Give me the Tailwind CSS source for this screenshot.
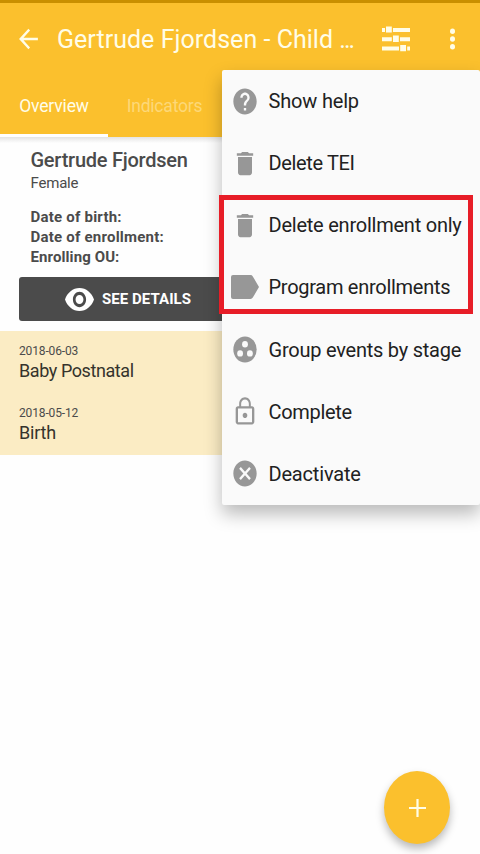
<!DOCTYPE html>
<html lang="en">
<head>
<meta charset="utf-8">
<title>Dashboard</title>
<script src="https://cdn.jsdelivr.net/npm/@tailwindcss/browser@4"></script>
</head>
<body class="relative h-[854px] w-[480px] overflow-hidden bg-[#fefefe] font-['Roboto',sans-serif] text-[#4b4b4b]">
<header class="flex h-[137px] flex-col border-t-[3px] border-[#c98f00] bg-[#fbc02d] text-[#fffde8]">
  <div class="flex h-[72px] items-center pl-[16px]">
    <svg class="h-[28px] w-[25px]" viewBox="0 0 24 24" preserveAspectRatio="none" fill="none" stroke="currentColor" stroke-width="2.200"><path d="M21 12H5M12.700 4L4.500 12l8.200 8"/></svg>
    <h1 class="ml-[16px] w-[309px] pt-px text-[25px] leading-[32px] tracking-[0.03px] whitespace-nowrap">Gertrude Fjordsen - Child <span class="tracking-[-2px]">...</span></h1>
    <svg class="ml-[16px] h-[26px] w-[28px]" viewBox="0 0 28 26" fill="currentColor"><path d="M0 2h3v4H0zM4 0.500h5.800v6H4zM11 2h17v4H11zM0 11.200h9.800v4H0zM11 9.500h5.800V16H11zM18 11.200h10v4H18zM0 20.500h17v4H0zM18.200 19h5.800v6.300h-5.800zM25.200 20.500h2.800v4h-2.800z"/></svg>
    <svg class="ml-[40px] h-[22px] w-[6px]" viewBox="0 0 6 22" fill="currentColor"><ellipse cx="2.500" cy="3.300" rx="2.500" ry="2.700"/><ellipse cx="2.500" cy="11" rx="2.500" ry="2.700"/><ellipse cx="2.500" cy="18.700" rx="2.500" ry="2.700"/></svg>
  </div>
  <nav class="flex flex-1 text-[17.500px]">
    <div class="flex w-[108px] items-center justify-center border-b-[3px] border-white pt-[3px]"><span class="tracking-[-0.15px]">Overview</span></div>
    <div class="flex w-[113px] items-center justify-center text-[#fdd878]"><span class="tracking-[-0.2px]">Indicators</span></div>
  </nav>
</header>
<section class="h-[194px] bg-linear-to-b from-[#e4e4e4] to-[#fefefe] to-[6px] pt-[10px]">
  <div class="pl-[30.500px]">
    <h2 class="text-[20px] leading-[26px] font-medium tracking-[-0.25px]">Gertrude Fjordsen</h2>
    <p class="text-[15px] leading-[20px] tracking-[-0.2px]">Female</p>
    <div class="mt-[14px] text-[15px] leading-[20px] font-bold tracking-[0.22px]">
      <p>Date of birth:</p><p>Date of enrollment:</p><p class="tracking-[0.1px]">Enrolling OU:</p>
    </div>
  </div>
  <button class="mt-[10px] ml-[19px] flex h-[44px] w-[442px] items-center rounded-[3px] bg-[#4b4b4b] pl-[46px] text-white">
    <svg class="h-[23px] w-[29px]" viewBox="1 4.500 22 15" preserveAspectRatio="none" fill="currentColor"><path d="M12 4.500C7 4.500 2.730 7.610 1 12c1.730 4.390 6 7.500 11 7.500s9.270-3.110 11-7.500c-1.730-4.390-6-7.500-11-7.500zM12 17c-2.760 0-5-2.240-5-5s2.240-5 5-5 5 2.240 5 5-2.240 5-5 5zm0-8c-1.660 0-3 1.340-3 3s1.340 3 3 3 3-1.340 3-3-1.340-3-3-3z"/></svg>
    <span class="ml-[8px] text-[15px] font-bold tracking-[0.05px]">SEE DETAILS</span>
  </button>
</section>
<section class="h-[124px] bg-[#fbecc4] pl-[19px]">
  <div class="h-[62px] pt-[12px]"><p class="text-[12px] leading-[16px] tracking-[-0.15px]">2018-06-03</p><p class="text-[18px] leading-[23px] tracking-[-0.42px] text-[#35332c]">Baby Postnatal</p></div>
  <div class="h-[62px] pt-[12px]"><p class="text-[12px] leading-[16px] tracking-[-0.15px]">2018-05-12</p><p class="text-[18px] leading-[23px] tracking-[-0.2px] text-[#35332c]">Birth</p></div>
</section>

<!-- Overflow menu -->
<div class="absolute top-[70px] left-[222px] flex h-[435px] w-[258px] flex-col rounded-[2px] bg-[#fafafa] text-[20px] whitespace-nowrap text-[#212121] shadow-[0_9px_18px_#00000045]">
  <div class="flex flex-1 items-center pl-[9px]"><svg class="mr-[9.500px] h-[31px] w-[28px]" viewBox="0 0 24 24" preserveAspectRatio="none" fill="#979797"><path d="M12 2C6.480 2 2 6.480 2 12s4.480 10 10 10 10-4.480 10-10S17.520 2 12 2zm1 17h-2v-2h2v2zm2.070-7.750l-.9.920C13.450 12.900 13 13.500 13 15h-2v-.5c0-1.100.450-2.100 1.170-2.830l1.240-1.260c.370-.360.590-.860.590-1.410 0-1.100-.9-2-2-2s-2 .9-2 2H8c0-2.210 1.790-4 4-4s4 1.790 4 4c0 .880-.360 1.680-.930 2.250z"/></svg><span class="tracking-[-0.18px]">Show help</span></div>
  <div class="flex flex-1 items-center pl-[9px]"><svg class="mr-[9.500px] h-[31px] w-[28px]" viewBox="0 0 24 24" preserveAspectRatio="none" fill="#979797"><path d="M6 19c0 1.100.9 2 2 2h8c1.100 0 2-.9 2-2V7H6v12zM19 4h-3.500l-1-1h-5l-1 1H5v2h14V4z"/></svg><span class="tracking-[-0.35px]">Delete TEI</span></div>
  <div class="flex flex-1 items-center pl-[9px]"><svg class="mr-[9.500px] h-[31px] w-[28px]" viewBox="0 0 24 24" preserveAspectRatio="none" fill="#979797"><path d="M6 19c0 1.100.9 2 2 2h8c1.100 0 2-.9 2-2V7H6v12zM19 4h-3.500l-1-1h-5l-1 1H5v2h14V4z"/></svg><span class="tracking-[-0.23px]">Delete enrollment only</span></div>
  <div class="flex flex-1 items-center pl-[9px]"><svg class="mr-[9.500px] h-[24px] w-[28px]" viewBox="0 0 28 24" fill="#979797"><path d="M2 0h17.500q1.500 0 2.300 1.400L28 12l-6.200 10.600Q21 24 19.500 24H2Q0 24 0 22V2Q0 0 2 0z"/></svg><span class="tracking-[-0.28px]">Program enrollments</span></div>
  <div class="flex flex-1 items-center pl-[9px]"><svg class="mr-[9.500px] h-[31px] w-[28px]" viewBox="0 0 24 24" preserveAspectRatio="none" fill="#979797"><circle cx="12" cy="12" r="10"/><g fill="#fafafa"><circle cx="12" cy="8" r="2.500"/><circle cx="7.800" cy="15" r="2.500"/><circle cx="16.200" cy="15" r="2.500"/></g></svg><span class="tracking-[-0.23px]">Group events by stage</span></div>
  <div class="flex flex-1 items-center pl-[9px]"><svg class="mr-[9.500px] h-[31px] w-[28px]" viewBox="0 0 24 24" preserveAspectRatio="none" fill="#979797"><path d="M12 17c1.100 0 2-.9 2-2s-.9-2-2-2-2 .9-2 2 .9 2 2 2zm6-9h-1V6c0-2.760-2.240-5-5-5S7 3.240 7 6v2H6c-1.100 0-2 .9-2 2v10c0 1.100.9 2 2 2h12c1.100 0 2-.9 2-2V10c0-1.100-.9-2-2-2zM8.700 6c0-1.820 1.480-3.300 3.300-3.300s3.300 1.480 3.300 3.300v2H8.700V6zM18 20.300H6V9.700h12v10.600z"/></svg><span class="tracking-[-0.32px]">Complete</span></div>
  <div class="flex flex-1 items-center pl-[9px]"><svg class="mr-[9.500px] h-[31px] w-[28px]" viewBox="0 0 24 24" preserveAspectRatio="none" fill="#979797"><path d="M12 2C6.470 2 2 6.470 2 12s4.470 10 10 10 10-4.470 10-10S17.530 2 12 2zm5 13.590L15.590 17 12 13.410 8.410 17 7 15.590 10.590 12 7 8.410 8.410 7 12 10.590 15.590 7 17 8.410 13.410 12 17 15.590z"/></svg><span class="tracking-[-0.18px]">Deactivate</span></div>
</div>

<!-- Highlight frame -->
<div class="absolute top-[195px] left-[219px] h-[119px] w-[254px] border-[5px] border-[#e71d27]"></div>

<!-- Add button -->
<button class="absolute top-[771px] left-[384px] flex h-[73px] w-[66px] items-center justify-center rounded-[50%] bg-[#fbc02d] shadow-[0_5px_9px_#00000045]">
  <svg class="h-[18px] w-[17px]" viewBox="0 0 17 18" fill="#fffde8"><path d="M7.400 0h2.200v7.900H17v2.200H9.600V18H7.400v-7.900H0V7.900h7.400z"/></svg>
</button>
</body>
</html>
